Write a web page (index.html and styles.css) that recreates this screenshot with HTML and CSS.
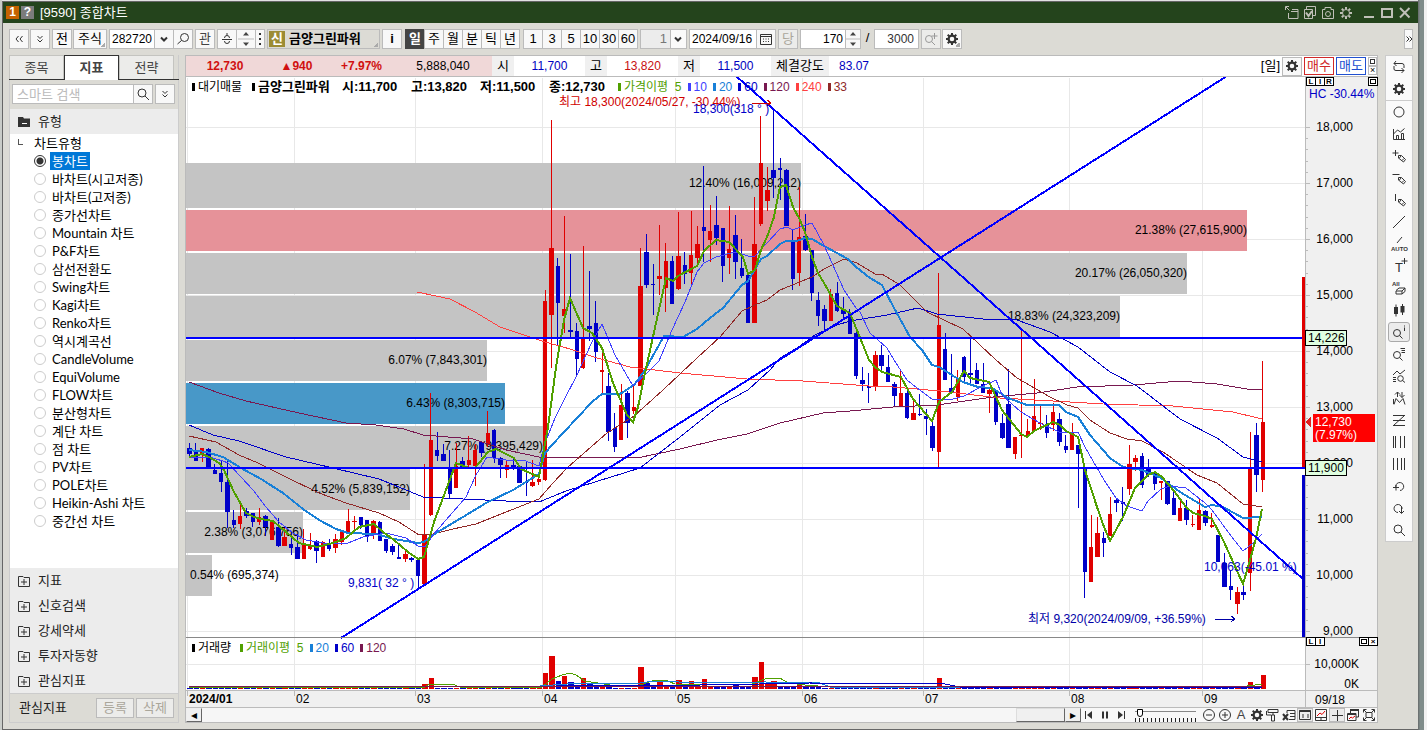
FILE: index.html
```html
<!DOCTYPE html>
<html lang="ko">
<head>
    <meta charset="UTF-8">
    <title>[9590] 종합차트</title>
    <link rel="stylesheet" href="styles.css">
</head>
<body>
    <svg class="sprite" aria-hidden="true">
        <symbol id="gear" viewBox="0 0 16 16"><circle cx="8" cy="8" r="3.4" stroke-width="2.2"/><path stroke-width="2" d="M8 2v2.500M8 11.500V14M2 8h2.500M11.500 8H14M3.700 3.700l1.700 1.700M10.600 10.600l1.700 1.700M3.700 12.300l1.700-1.700M10.600 5.400l1.700-1.700"/></symbol>
        <symbol id="gear-o" viewBox="0 0 16 16"><circle cx="8" cy="8" r="3.5"/><path stroke-width="2" d="M8 2v2.5M8 11.5V14M2 8h2.5M11.5 8H14M3.8 3.8l1.6 1.6M10.6 10.6l1.6 1.6M3.8 12.2l1.6-1.6M10.6 5.4l1.6-1.6"/></symbol>
        <symbol id="search" viewBox="0 0 16 16"><circle cx="7" cy="7" r="4"/><path d="M10 10l4 4"/></symbol>
        <symbol id="search-l" viewBox="0 0 16 16"><circle cx="9.5" cy="6.5" r="4"/><path d="M6.5 9.5L2.5 13"/></symbol>
        <symbol id="left2" viewBox="0 0 16 16"><path d="M7.5 5L5 8l2.5 3M11.5 5L9 8l2.5 3"/></symbol>
        <symbol id="right2" viewBox="0 0 8 16"><path d="M1.500 5.500L4 8l-2.500 2.500M4.500 5.500L7 8l-2.500 2.500"/></symbol>
        <symbol id="down2" viewBox="0 0 16 16"><path d="M5.5 5L8 7.5 10.5 5M5.5 8.5L8 11l2.5-2.5"/></symbol>
        <symbol id="down" viewBox="0 0 16 16"><path stroke-width="2" d="M5 6.5l3 3 3-3"/></symbol>
        <symbol id="link" viewBox="0 0 16 16"><path d="M5.5 7a2.5 2.5 0 1 1 5 0M3 8.5h10M5.5 10a2.5 2.5 0 1 0 5 0M8 2v2.5"/></symbol>
        <symbol id="calendar" viewBox="0 0 16 16"><path d="M2.5 3.5h11v10h-11zM2.5 5.5h11"/><path stroke-dasharray="1 1.5" d="M5 8h6.500M5 10.500h6.500"/></symbol>
        <symbol id="zoom-plus" viewBox="0 0 16 16"><circle cx="6" cy="8" r="3.500"/><path d="M8.500 10.500L12 14M11.500 2v6M8.500 5h6"/></symbol>
        <symbol id="win-out" viewBox="0 0 16 16"><path d="M1.500 5V1.500H5M2 2l3.500 3.500M8 4.500h6v9H4.500V8M7 6.500h7"/></symbol>
        <symbol id="win-check" viewBox="0 0 16 16"><path d="M4.500 4V1.500h9v9H11M2.500 4.500h8v9h-8z"/><path stroke-width="2" d="M4 7.500L6.500 11 10 6"/></symbol>
        <symbol id="camera" viewBox="0 0 16 16"><path d="M2.500 4.500H5v-2h6v2h2.500v9h-11z"/><circle cx="8" cy="9" r="2.500"/></symbol>
        <symbol id="folder-open" viewBox="0 0 16 16"><path fill="#333" stroke="none" d="M2 3h5l1 1.500h6V13H2z"/><path stroke="#fff" d="M6 9.500h5"/></symbol>
        <symbol id="folder-plus" viewBox="0 0 16 16"><path d="M2.500 3.500H7L8 4.500h5.500v9h-11zM8 6v6M5 9h6"/></symbol>
        <symbol id="refresh" viewBox="0 0 16 16"><path d="M5 2L3 4.500h8q2 0 2 2V9M3 4.500L5.500 7M3 7v3q0 1.500 2 1.500h8M10.500 9l2.500 2.500-2.500 2.500"/></symbol>
        <symbol id="circle" viewBox="0 0 16 16"><circle cx="8" cy="8" r="5"/></symbol>
        <symbol id="graph" viewBox="0 0 16 16"><path d="M2.500 3v10.500H14M2.500 8l4-4 3 2 4-3.500M5.500 13V9.500h2V13M10.500 13V7.500h2V13"/></symbol>
        <symbol id="pen" viewBox="0 0 16 16"><path d="M7.500 7.500h3l4 4-2 2.500-5-4zM10 8l-2 2.500M13 10.500l-2 2"/></symbol>
        <symbol id="line" viewBox="0 0 16 16"><path d="M2 14L14 2"/></symbol>
        <symbol id="eraser" viewBox="0 0 16 16"><path d="M5 10.500L8 8h6l-3 3H5v3h6v-3M11 14l3-2.500V8"/></symbol>
        <symbol id="candles" viewBox="0 0 16 16"><path stroke-width="4" d="M5 5v7M11.500 4v6.500"/><path d="M5 2.500v12M11.500 2v11"/></symbol>
        <symbol id="zoom-i" viewBox="0 0 16 16"><circle cx="6" cy="9" r="3.500"/><path d="M8.500 11.500l3 3M13.500 3.500V7M13.500 1.500v1"/></symbol>
        <symbol id="zoom-list" viewBox="0 0 16 16"><circle cx="6" cy="9" r="3.500"/><path d="M8.500 11.500l3 3M9.500 2.500h4.500M10.500 4.500H14M10.500 6.500H14"/></symbol>
        <symbol id="zoom-wave" viewBox="0 0 16 16"><circle cx="9.500" cy="10.500" r="2.800"/><path d="M11.500 12.500l2.500 2M2 7l4-4 3 3 5-4M2 9.500h3M2 11.500h3M2 13.500h3"/></symbol>
        <symbol id="wave-arrow" viewBox="0 0 16 16"><path d="M3 14.500l2-6 3.500 4 3.500-4 2 6M2.500 14V9M6.500 7V2L4 4.500M6.500 2L9 4.500M11 2v5.500M8.500 5L11 7.500 13.500 5"/></symbol>
        <symbol id="zee" viewBox="0 0 16 16"><path d="M2 3.500h12M13 4L3 13M2 8.500h12M2 13.500h12"/></symbol>
        <symbol id="bars-a" viewBox="0 0 16 16"><path d="M2.500 2v12M4.500 2v12M9.500 2v12M13.500 2v12"/></symbol>
        <symbol id="bars-b" viewBox="0 0 16 16"><path d="M2.500 2v12M6.500 2v12M10.500 2v12M13.500 2v12"/></symbol>
        <symbol id="undo" viewBox="0 0 16 16"><path d="M5 10a4 4 0 1 1 4 2.500M2 9.500h6M5 7v5.500"/></symbol>
        <symbol id="redo" viewBox="0 0 16 16"><path d="M7 12.500A4 4 0 1 1 11 9M10.500 7v6M8 11l2.500 2.500L13 11"/></symbol>
        <symbol id="to-start" viewBox="0 0 16 16"><path d="M4.500 4v8"/><path fill="#333" stroke="none" d="M11 4v8L6 8z"/></symbol>
        <symbol id="pause" viewBox="0 0 16 16"><path stroke-width="2" d="M6 4.500v7M10 4.500v7"/></symbol>
        <symbol id="to-end" viewBox="0 0 16 16"><path d="M11.500 4v8"/><path fill="#333" stroke="none" d="M5 4v8l5-4z"/></symbol>
        <symbol id="minus-c" viewBox="0 0 16 16"><circle cx="8" cy="8" r="5.500"/><path d="M5 8h6"/></symbol>
        <symbol id="plus-c" viewBox="0 0 16 16"><circle cx="8" cy="8" r="5.500"/><path d="M5 8h6M8 5v6"/></symbol>
        <symbol id="roller" viewBox="0 0 16 16"><path d="M3 2.500h10v3H3zM1.500 4v4H6M6.500 8h3v6h-3zM8 5.500V8"/></symbol>
        <symbol id="sheet-x" viewBox="0 0 16 16"><path d="M6 6V3.500h8v9H8M9 6.500h5M9 9.500h5"/><path stroke-width="2" d="M2 7l5 6M7 7l-5 6"/></symbol>
        <symbol id="grid-cal" viewBox="0 0 16 16"><path stroke-width="2" d="M2.500 4h11"/><path d="M2.500 3.500h11v9h-11zM5 8h2M5 10h2M10 8h2M10 10h2"/></symbol>
        <symbol id="mini-chart" viewBox="0 0 16 16"><path d="M2.500 2.500h11v11h-11zM2.500 10.500h11M8 11v2"/><path stroke="#d00" d="M4 9l3-3 2 1.500L12 4"/></symbol>
        <symbol id="plus" viewBox="0 0 16 16"><path d="M8.500 3v11M3 8.500h11"/></symbol>
        <symbol id="win-chart" viewBox="0 0 16 16"><path stroke-width="2" d="M5 3h9M3 7h8"/><path d="M5.500 3v3M13.500 3v7H11M2.500 6.500h8.500v7H2.500z"/><path stroke="#d00" d="M4 12l2-2 1.500 1L10 9"/></symbol>
        <symbol id="full" viewBox="0 0 16 16"><path d="M2.500 5.500v-3h3M10.500 2.500h3v3M13.500 10.500v3h-3M5.500 13.500h-3v-3M5 5.500h6v5H5zM3 3l2 2M13 3l-2 2M13 13l-2-2M3 13l2-2"/></symbol>
        <symbol id="updown" viewBox="0 0 16 20"><path fill="#444" stroke="none" d="M8 3l3 3.500H5zM8 17l3-3.500H5z"/><path stroke="#bbb" d="M0 10h16"/></symbol>
        <symbol id="dots" viewBox="0 0 8 16"><path stroke-width="2" d="M4 2v2M4 7v2M4 12v2"/></symbol>
    </svg>

    <div class="window">
        <header class="titlebar">
            <span class="badge orange">1</span>
            <span class="badge gray">?</span>
            <h1>[9590] 종합차트</h1>
            <div class="title-buttons">
                <button aria-label="분리"><svg><use href="#win-out"/></svg></button>
                <button aria-label="복사"><svg><use href="#win-check"/></svg></button>
                <button aria-label="캡처"><svg><use href="#camera"/></svg></button>
                <button aria-label="설정"><svg><use href="#gear-o"/></svg></button>
                <button class="big" aria-label="최소화"><svg viewBox="0 0 16 16"><path d="M3 12h10"/></svg></button>
                <button class="big" aria-label="최대화"><svg viewBox="0 0 16 16"><path d="M3 4h10v8H3z"/></svg></button>
                <button class="big" aria-label="닫기"><svg viewBox="0 0 16 16"><path d="M3 3l9.500 9.500M12.500 3L3 12.500"/></svg></button>
            </div>
        </header>

        <div class="toolbar">
            <div class="group">
                <button class="tool" aria-label="이전"><svg><use href="#left2"/></svg></button>
                <button class="tool" aria-label="펼치기"><svg><use href="#down2"/></svg></button>
            </div>
            <div class="group">
                <button class="tool">전</button>
                <button class="tool wide corner">주식</button>
            </div>
            <div class="joined">
                <input class="code" type="text" value="282720" aria-label="종목코드">
                <button class="tool" aria-label="목록"><svg><use href="#down"/></svg></button>
                <button class="tool" aria-label="종목검색"><svg><use href="#search-l"/></svg></button>
            </div>
            <button class="tool dim">관</button>
            <div class="joined">
                <button class="tool" aria-label="연동"><svg><use href="#link"/></svg></button>
                <button class="tool" aria-label="위아래"><svg class="tall"><use href="#updown"/></svg></button>
                <button class="tool slim" aria-label="더보기"><svg class="thin"><use href="#dots"/></svg></button>
            </div>
            <button class="stock corner"><span class="new">신</span>금양그린파워</button>
            <button class="tool bold">i</button>
            <div class="joined periods">
                <button class="tool on">일</button>
                <button class="tool">주</button>
                <button class="tool">월</button>
                <button class="tool">분</button>
                <button class="tool">틱</button>
                <button class="tool">년</button>
            </div>
            <div class="joined periods">
                <button class="tool">1</button>
                <button class="tool">3</button>
                <button class="tool">5</button>
                <button class="tool">10</button>
                <button class="tool">30</button>
                <button class="tool">60</button>
            </div>
            <div class="picker">
                <select aria-label="주기"><option>1</option></select>
                <svg><use href="#down"/></svg>
            </div>
            <div class="joined">
                <input class="date" type="text" value="2024/09/16" aria-label="날짜">
                <button class="tool" aria-label="달력"><svg><use href="#calendar"/></svg></button>
            </div>
            <button class="tool off">당</button>
            <div class="joined">
                <input class="count" type="text" value="170" aria-label="표시 개수">
                <button class="tool spin" aria-label="증감"><svg class="tall"><use href="#updown"/></svg></button>
            </div>
            <span class="slash">/</span>
            <input class="total" type="text" value="3000" aria-label="전체 개수">
            <div class="group">
                <button class="tool off" aria-label="확대"><svg><use href="#zoom-plus"/></svg></button>
                <button class="tool corner" aria-label="차트설정"><svg><use href="#gear"/></svg></button>
            </div>
            <button class="tool more" aria-label="더보기"><svg class="thin"><use href="#right2"/></svg></button>
        </div>

        <div class="main">
            <aside class="sidebar">
                <nav class="tabs">
                    <button>종목</button>
                    <button class="active">지표</button>
                    <button>전략</button>
                </nav>
                <div class="search">
                    <div class="joined">
                        <input type="text" placeholder="스마트 검색" aria-label="스마트 검색">
                        <button class="tool" aria-label="검색"><svg><use href="#search"/></svg></button>
                    </div>
                    <button class="tool" aria-label="펼치기"><svg><use href="#down2"/></svg></button>
                </div>
                <button class="section"><svg><use href="#folder-open"/></svg>유형</button>
                <div class="tree">
                    <p>차트유형</p>
                    <label><input type="radio" name="type" checked><span>봉차트</span></label>
                    <label><input type="radio" name="type"><span>바차트(시고저종)</span></label>
                    <label><input type="radio" name="type"><span>바차트(고저종)</span></label>
                    <label><input type="radio" name="type"><span>종가선차트</span></label>
                    <label><input type="radio" name="type"><span>Mountain 차트</span></label>
                    <label><input type="radio" name="type"><span>P&amp;F차트</span></label>
                    <label><input type="radio" name="type"><span>삼선전환도</span></label>
                    <label><input type="radio" name="type"><span>Swing차트</span></label>
                    <label><input type="radio" name="type"><span>Kagi차트</span></label>
                    <label><input type="radio" name="type"><span>Renko차트</span></label>
                    <label><input type="radio" name="type"><span>역시계곡선</span></label>
                    <label><input type="radio" name="type"><span>CandleVolume</span></label>
                    <label><input type="radio" name="type"><span>EquiVolume</span></label>
                    <label><input type="radio" name="type"><span>FLOW차트</span></label>
                    <label><input type="radio" name="type"><span>분산형차트</span></label>
                    <label><input type="radio" name="type"><span>계단 차트</span></label>
                    <label><input type="radio" name="type"><span>점 차트</span></label>
                    <label><input type="radio" name="type"><span>PV차트</span></label>
                    <label><input type="radio" name="type"><span>POLE차트</span></label>
                    <label><input type="radio" name="type"><span>Heikin-Ashi 차트</span></label>
                    <label><input type="radio" name="type"><span>중간선 차트</span></label>
                </div>
                <button class="section"><svg><use href="#folder-plus"/></svg>지표</button>
                <button class="section"><svg><use href="#folder-plus"/></svg>신호검색</button>
                <button class="section"><svg><use href="#folder-plus"/></svg>강세약세</button>
                <button class="section"><svg><use href="#folder-plus"/></svg>투자자동향</button>
                <button class="section"><svg><use href="#folder-plus"/></svg>관심지표</button>
                <div class="side-foot">
                    <span>관심지표</span>
                    <button disabled>등록</button>
                    <button disabled>삭제</button>
                </div>
            </aside>

            <section class="panel">
                <div class="quote">
                    <div class="now">
                        <b>12,730</b><b>▲940</b><b>+7.97%</b><span>5,888,040</span>
                    </div>
                    <span class="name">시</span><span class="val">11,700</span>
                    <span class="name">고</span><span class="val up">13,820</span>
                    <span class="name">저</span><span class="val">11,500</span>
                    <span class="name long">체결강도</span><span class="val short">83.07</span>
                    <div class="trade">
                        <span>[일]</span>
                        <button class="tool" aria-label="설정"><svg><use href="#gear"/></svg></button>
                        <button class="buy">매수</button>
                        <button class="sell">매도</button>
                        <div class="minis"><button aria-label="최대화"><i></i></button><button aria-label="닫기">×</button></div>
                    </div>
                </div>

                <div class="plot">
                    <svg id="chart" viewBox="186 77 1191 630"></svg>
                    <div class="legend">
                        <span>대기매물</span>
                        <span class="bold">금양그린파워</span>
                        <b>시:11,700</b><b>고:13,820</b><b>저:11,500</b><b>종:12,730</b>
                        <span class="c5">가격이평&nbsp; 5</span>
                        <span class="c10">10</span>
                        <span class="c20">20</span>
                        <span class="c60">60</span>
                        <span class="c120">120</span>
                        <span class="c240">240</span>
                        <span class="c33">33</span>
                    </div>
                    <div class="legend volume">
                        <span>거래량</span>
                        <span class="c5">거래이평&nbsp; 5</span>
                        <span class="c20">20</span>
                        <span class="c60">60</span>
                        <span class="c120">120</span>
                    </div>
                    <div class="axis-buttons">
                        <button>L</button><button>I</button><button>R</button>
                        <button class="end" aria-label="최대화"><i></i></button>
                    </div>
                    <div class="axis-buttons volume">
                        <button>L</button><button>I</button>
                        <button class="end" aria-label="최대화"><i></i></button><button>×</button>
                    </div>
                </div>

                <div class="bottom">
                    <div class="scroll">
                        <button aria-label="왼쪽">◂</button>
                        <div class="track"><div class="thumb"></div></div>
                        <button aria-label="오른쪽">▸</button>
                    </div>
                    <div class="icons">
                        <button aria-label="처음"><svg><use href="#to-start"/></svg></button>
                        <button aria-label="멈춤"><svg><use href="#pause"/></svg></button>
                        <button aria-label="끝"><svg><use href="#to-end"/></svg></button>
                    </div>
                    <input class="speed" type="range" min="0" max="100" value="4" aria-label="속도">
                    <div class="icons">
                        <button aria-label="축소"><svg><use href="#minus-c"/></svg></button>
                        <button aria-label="확대"><svg><use href="#plus-c"/></svg></button>
                        <button>A</button>
                        <button aria-label="설정"><svg><use href="#gear"/></svg></button>
                        <button aria-label="색상"><svg><use href="#roller"/></svg></button>
                        <button aria-label="엑셀"><svg><use href="#sheet-x"/></svg></button>
                        <button class="on" aria-label="표"><svg><use href="#grid-cal"/></svg></button>
                        <button aria-label="차트"><svg><use href="#mini-chart"/></svg></button>
                        <button class="on" aria-label="십자선"><svg><use href="#plus"/></svg></button>
                        <button aria-label="새 창"><svg><use href="#win-chart"/></svg></button>
                        <button aria-label="전체화면"><svg><use href="#full"/></svg></button>
                    </div>
                </div>
            </section>

            <div class="rail">
                <button aria-label="새로고침"><svg><use href="#refresh"/></svg></button>
                <button aria-label="설정"><svg><use href="#gear"/></svg></button>
                <hr>
                <button aria-label="원"><svg><use href="#circle"/></svg></button>
                <button aria-label="그래프"><svg><use href="#graph"/></svg></button>
                <button aria-label="십자 그리기"><svg viewBox="0 0 16 16"><use href="#pen"/><path d="M4.500 2v6M1.500 5h6"/></svg></button>
                <button aria-label="수평선"><svg viewBox="0 0 16 16"><use href="#pen"/><path d="M1.500 4.500h7"/></svg></button>
                <button aria-label="수직선"><svg viewBox="0 0 16 16"><use href="#pen"/><path d="M4.500 2v7"/></svg></button>
                <button aria-label="추세선"><svg><use href="#line"/></svg></button>
                <button class="auto" aria-label="자동추세선"><svg viewBox="0 0 16 16"><path d="M6 7l5-6"/><text x="0" y="15">AUTO</text></svg></button>
                <button class="txt" aria-label="문자"><svg viewBox="0 0 16 16"><path d="M13.500 0v6M10.500 3h6"/><text x="4" y="14">T</text></svg></button>
                <button class="auto" aria-label="모두 지우기"><svg viewBox="0 0 16 16"><use href="#eraser"/><text x="1" y="6">All</text></svg></button>
                <button aria-label="봉"><svg><use href="#candles"/></svg></button>
                <button class="on" aria-label="정보"><svg><use href="#zoom-i"/></svg></button>
                <button aria-label="목록 조회"><svg><use href="#zoom-list"/></svg></button>
                <button aria-label="패턴 조회"><svg><use href="#zoom-wave"/></svg></button>
                <button aria-label="파동"><svg><use href="#wave-arrow"/></svg></button>
                <button aria-label="되돌림"><svg><use href="#zee"/></svg></button>
                <button aria-label="시간대"><svg><use href="#bars-a"/></svg></button>
                <button aria-label="등간격"><svg><use href="#bars-b"/></svg></button>
                <button aria-label="이전으로"><svg><use href="#undo"/></svg></button>
                <button aria-label="다음으로"><svg><use href="#redo"/></svg></button>
                <button aria-label="찾기"><svg><use href="#search"/></svg></button>
            </div>
        </div>
    </div>
    <script src="chart.js"></script>
</body>
</html>
```

FILE: styles.css
```css
* {
    box-sizing: border-box;
}
body {
    margin: 0;
    min-height: 100vh;
    padding: 1px 9px 0 2px;
    background: linear-gradient(to right, #c9ccc8 0, #c9ccc8 2px, transparent 2px, transparent calc(100% - 9px), #66696a calc(100% - 9px), #7f8c8a calc(100% - 7px), #7f8c8a calc(100% - 3px), #f2f2f2 calc(100% - 3px)), #e2e2e2;
    font: 13px/18px "Liberation Sans", "Noto Sans CJK KR", sans-serif;
    color: #000;
}
button, input, select {
    font: inherit;
    color: inherit;
    margin: 0;
    padding: 0;
    border: none;
    border-radius: 0;
    background: none;
    outline: none;
}
svg {
    display: block;
    width: 16px;
    height: 16px;
    flex: none;
    fill: none;
    stroke: #333;
    stroke-width: 1;
}
.sprite {
    position: absolute;
    width: 0;
    height: 0;
}
.window {
    display: flex;
    flex-direction: column;
    min-height: calc(100vh - 1px);
    border: 1px solid #666;
    border-right: none;
    background: #dcdbd5;
}

/* title bar */
.titlebar {
    display: flex;
    align-items: center;
    gap: 2px;
    height: 21px;
    padding: 0 5px 0 3px;
    background: #24441c;
    color: #fff;
}
.titlebar h1 {
    margin: 0 0 0 4px;
    font-size: 13px;
    font-weight: normal;
}
.badge {
    width: 13px;
    height: 13px;
    font-size: 12px;
    font-weight: bold;
    line-height: 13px;
    text-align: center;
}
.orange {
    background: #c46200;
}
.gray {
    background: #7c7c7c;
}
.title-buttons {
    display: flex;
    gap: 2px;
    margin-left: auto;
}
.title-buttons svg {
    stroke: #c0c0b8;
}
.title-buttons .big svg {
    stroke-width: 2;
}
.title-buttons .big:nth-child(5) {
    margin-left: 5px;
}

/* toolbar */
.toolbar {
    display: flex;
    gap: 2px;
    padding: 6px 5px 6px 6px;
}
.group {
    display: flex;
    gap: 1px;
}
.joined {
    display: flex;
}
.joined > * + * {
    margin-left: -1px;
}
.tool {
    position: relative;
    display: flex;
    align-items: center;
    justify-content: center;
    width: 20px;
    height: 20px;
    border: 1px solid #bbb;
    background: #f8f8f8;
}
.tool.wide {
    width: 34px;
}
.tool.slim {
    width: 10px;
}
.tool.dim {
    color: #444;
}
.tool.off {
    background: #ececea;
    color: #aaa69a;
}
.tool.off svg {
    stroke: #999;
}
.tool.on {
    background: #444;
    border-color: #444;
    color: #fff;
    font-weight: bold;
}
.tool.bold {
    font-weight: bold;
}
.tool.spin {
    width: 16px;
}
.tool.more {
    width: 9px;
    margin-left: auto;
    overflow: hidden;
}
svg.tall {
    height: 20px;
}
svg.thin {
    width: 8px;
}
.tool.corner, .stock.corner {
    background-image: linear-gradient(135deg, transparent 50%, #aaa 50%);
    background-size: 5px 5px;
    background-position: right 1px bottom 1px;
    background-repeat: no-repeat;
}
.periods {
    margin-left: 1px;
}
.toolbar input {
    height: 20px;
    border: 1px solid #bbb;
    background: #fff;
    padding: 0 2px;
    font-size: 12px;
}
.toolbar .code {
    width: 46px;
}
.toolbar .date {
    width: 68px;
}
.toolbar .count {
    width: 46px;
    text-align: right;
}
.toolbar .total {
    width: 45px;
    padding-right: 4px;
    text-align: right;
    color: #333;
}
.stock {
    display: flex;
    align-items: center;
    gap: 4px;
    width: 113px;
    height: 20px;
    padding: 0 1px;
    border: 1px solid #bbb;
    font-weight: bold;
}
.new {
    width: 16px;
    height: 16px;
    background: #9c8c34;
    color: #fff;
    line-height: 16px;
}
.picker {
    position: relative;
    width: 47px;
    height: 20px;
    border: 1px solid #bbb;
    background: #fafafa;
}
.picker select {
    appearance: none;
    width: 30px;
    height: 18px;
    padding-right: 3px;
    border-right: 1px solid #bbb;
    background: #ececec;
    color: #777;
    text-align-last: right;
}
.picker svg {
    position: absolute;
    right: 0;
    top: 1px;
}
.slash {
    width: 9px;
    text-align: center;
}

/* left side */
.main {
    display: flex;
    align-items: flex-start;
    padding: 0 5px 0 6px;
}
.sidebar {
    flex: none;
    display: flex;
    flex-direction: column;
    width: 170px;
    height: 668px;
    margin-right: 6px;
    border: 1px solid #ccc;
    border-top: none;
}
.tabs {
    display: flex;
    height: 25px;
    margin: 0 -1px;
    border-bottom: 1px solid #333;
}
.tabs button {
    width: 55px;
    height: 24px;
    border: 1px solid #c4c4c0;
    border-bottom: none;
    background: #ececea;
    color: #444;
}
.tabs .active {
    height: 25px;
    border-color: #333;
    background: #fff;
    font-weight: bold;
}
.search {
    display: flex;
    justify-content: space-between;
    padding: 4px 3px 5px 2px;
}
.search input {
    width: 122px;
    height: 20px;
    padding: 0 4px;
    border: 1px solid #bbb;
    background: #fff;
}
.search input::placeholder {
    color: #bbb;
}
.section {
    display: flex;
    align-items: center;
    gap: 6px;
    width: 100%;
    height: 25px;
    flex: none;
    padding-left: 6px;
    background: #ececec;
    color: #222;
}
.tree {
    flex: 1;
    background: #fff;
    font-family: Lato, "Noto Sans CJK KR", sans-serif;
}
.tree p {
    margin: 0;
    padding-left: 24px;
    height: 18px;
    background: linear-gradient(#555, #555) 8px 5px / 1px 6px no-repeat, linear-gradient(#555, #555) 8px 10px / 5px 1px no-repeat;
}
.tree label {
    display: flex;
    align-items: center;
    gap: 4px;
    height: 18px;
    padding-left: 24px;
}
.tree input {
    appearance: none;
    width: 12px;
    height: 12px;
    border: 1px solid #ccc;
    border-radius: 50%;
    background: #fff;
}
.tree input:checked {
    border-color: #333;
    background: radial-gradient(#333 0, #333 3px, #fff 4px);
}
.tree span {
    height: 18px;
    padding: 0 2px;
}
.tree input:checked + span {
    background: #0078d7;
    color: #fff;
}
.side-foot {
    display: flex;
    align-items: center;
    gap: 2px;
    height: 29px;
    flex: none;
    padding: 0 4px 0 9px;
    border-top: 1px solid #ccc;
    color: #222;
}
.side-foot span {
    margin-right: auto;
}
.side-foot button {
    width: 38px;
    height: 20px;
    border: 1px solid #bbb;
    background: #ececea;
    color: #aaa69a;
}

/* quote bar */
.panel {
    flex: 1;
    min-width: 0;
    border: 1px solid #bbb;
    background: #fff;
}
.quote {
    display: flex;
    height: 21px;
    border-bottom: 1px solid #bbb;
    line-height: 20px;
    text-align: center;
}
.now {
    display: flex;
    width: 306px;
    background: #f0d8d8;
    font-size: 12px;
}
.now b {
    width: 65px;
    color: #d01010;
}
.now b:first-child {
    width: 78px;
}
.now span {
    flex: 1;
}
.name {
    width: 22px;
    background: #f0f0f0;
}
.name.long {
    width: 58px;
}
.val {
    width: 71px;
    color: #0000c0;
    font-size: 12px;
}
.val.short {
    width: 50px;
}
.val.up {
    color: #c81010;
}
.trade {
    display: flex;
    align-items: center;
    gap: 2px;
    margin-left: auto;
}
.trade .tool {
    height: 19px;
}
.trade .buy, .trade .sell {
    width: 30px;
    height: 18px;
    border: 1px solid #d02828;
    color: #d02828;
    line-height: 16px;
}
.trade .sell {
    border-color: #2050d0;
    color: #2050d0;
}
.minis {
    display: flex;
    flex-direction: column;
    width: 9px;
}
.minis button {
    height: 9px;
    padding: 1px;
    border: 1px solid #bbb;
    font-size: 9px;
    line-height: 5px;
}
.minis i {
    display: block;
    height: 5px;
    border: 1px solid #333;
}

/* chart */
.plot {
    position: relative;
}
#chart {
    width: 100%;
    height: auto;
    shape-rendering: crispEdges;
}
#chart text {
    stroke: none;
    fill: #000;
    font-size: 12px;
}
.legend {
    position: absolute;
    left: 6px;
    top: 1px;
    display: flex;
    gap: 6px;
    font-size: 12px;
}
.legend.volume {
    top: 562px;
}
.legend span::before {
    content: "";
    display: inline-block;
    width: 3px;
    height: 8px;
    margin-right: 3px;
    background: currentColor;
}
.legend .bold, .legend b {
    font-size: 13px;
    font-weight: bold;
}
.legend b {
    min-width: 63px;
}
.legend span:first-child {
    min-width: 54px;
}
.legend.volume span:first-child {
    min-width: 42px;
}
.legend .bold {
    min-width: 84px;
}
.c5 {
    color: #50a000;
}
.c10 {
    color: #4040ff;
}
.c20 {
    color: #1880d8;
}
.c60 {
    color: #0000c8;
}
.c120 {
    color: #781850;
}
.c240 {
    color: #ff4040;
}
.c33 {
    color: #902828;
}
.axis-buttons {
    position: absolute;
    right: 0;
    top: 0;
    display: flex;
    width: 71px;
}
.axis-buttons.volume {
    top: 560px;
}
.axis-buttons button {
    width: 10px;
    height: 9px;
    margin-right: -1px;
    border: 1px solid #000;
    background: #fff;
    font-size: 8px;
    font-weight: bold;
    line-height: 7px;
}
.axis-buttons .end {
    margin-left: auto;
    padding: 1px;
}
.axis-buttons i {
    display: block;
    height: 5px;
    border: 1px solid #000;
}

/* bottom bar */
.bottom {
    display: flex;
    height: 15px;
    border-top: 1px solid #bbb;
    background: #f8f8f8;
}
.scroll {
    flex: 1;
    display: flex;
}
.scroll button {
    width: 16px;
    border: 1px solid;
    border-color: #eee #666 #666 #eee;
    background: #f0f0f0;
    font-size: 12px;
    line-height: 10px;
}
.track {
    flex: 1;
    background: #f6f6f6;
}
.thumb {
    width: 49px;
    height: 14px;
    margin-left: auto;
    border: 1px solid;
    border-color: #ddd #666 #666 #ddd;
    background: #f0f0f0;
}
.icons {
    display: flex;
}
.icons button {
    display: flex;
    align-items: center;
    justify-content: center;
    width: 16px;
    height: 14px;
    color: #444;
}
.icons .on {
    border: 1px solid #bbb;
    background: #ececec;
}
.speed {
    appearance: none;
    width: 61px;
    height: 14px;
    margin: 0 5px 0 6px;
    background: linear-gradient(#888, #888) 0 3px / 100% 1px no-repeat, repeating-linear-gradient(to right, #222 0, #222 1px, transparent 1px, transparent 4px) 0 100% / 100% 4px no-repeat;
}
.speed::-webkit-slider-thumb {
    appearance: none;
    width: 6px;
    height: 8px;
    margin-top: -4px;
    border: 1px solid #000;
    border-radius: 0 0 3px 3px;
    background: #fff;
}

/* right rail */
.rail {
    display: flex;
    flex-direction: column;
    align-items: center;
    width: 28px;
    margin-left: 7px;
    border: 1px solid #ccc;
    background: #fafafa;
}
.rail button {
    display: flex;
    align-items: center;
    justify-content: center;
    width: 22px;
    height: 22px;
}
.rail hr {
    width: 100%;
    margin: 0;
    border: none;
    border-top: 1px solid #ccc;
}
.rail .on {
    height: 20px;
    margin: 1px 0;
    border: 1px solid #aaa;
    border-radius: 3px;
    background: #ececec;
}
.rail svg {
    overflow: visible;
}
.rail text {
    fill: #333;
    stroke: none;
    font-size: 6px;
    font-weight: bold;
}
.rail .txt text {
    font-size: 13px;
    font-weight: normal;
}
```

FILE: chart.js
```js
const svg = document.getElementById('chart');
const RIGHT = 1305;
const FIRST_X = 189.4;
const STEP = 6.351;
const RED = '#e00000';
const BLUE = '#0000c8';

function add(tag, attrs, text) {
    const el = document.createElementNS('http://www.w3.org/2000/svg', tag);
    for (const key in attrs) el.setAttribute(key, attrs[key]);
    if (text) el.textContent = text;
    svg.appendChild(el);
}
function rect(x, y, width, height, fill) {
    add('rect', { x, y, width, height, fill, stroke: 'none' });
}
function line(points, stroke, width) {
    add('polyline', { points, stroke, 'stroke-width': width });
}
function label(x, y, text, color, anchor) {
    add('text', { x, y, style: 'fill:' + (color || '#000'), 'text-anchor': anchor || 'start' }, text);
}

// grid
for (let i = 0; i < 10; i++) rect(186, 127 + i * 56, RIGHT - 186, 1, '#e8e8e8');
rect(186, 664, RIGHT - 186, 1, '#e8e8e8');
const months = [[187, '2024/01'], [294, '02'], [415, '03'], [542, '04'], [675, '05'], [802, '06'], [923, '07'], [1069, '08'], [1202, '09']];
months.forEach(m => rect(m[0], 78, 1, 612, '#e8e8e8'));

// volume profile: top, height, right edge, label
const profile = [
    [163, 45, 801, '12.40% (16,009,212)'],
    [210, 41, 1247, '21.38% (27,615,900)', '#e69299'],
    [253, 41, 1187, '20.17% (26,050,320)'],
    [296, 41, 1120, '18.83% (24,323,209)'],
    [340, 41, 487, '6.07% (7,843,301)'],
    [383, 41, 505, '6.43% (8,303,715)', '#4898c8'],
    [426, 41, 543, '7.27% (9,395,429)'],
    [469, 41, 410, '4.52% (5,839,152)'],
    [512, 41, 303, '2.38% (3,076,756)'],
    [555, 41, 212, '0.54% (695,374)']
];
profile.forEach(p => {
    rect(186, p[0], p[2] - 186, p[1], p[4] || '#c4c4c4');
    if (p[2] < 250) label(190, p[0] + 24, p[3]);
    else label(p[2], p[0] + 24, p[3], '#000', 'end');
});

// candles: high, body top, body bottom, low, r(ise) / b(reak)
const candles = `443 448 454 457 b,443 451 461 461 b,448 448 454 462 r,448 449 467 467 b,464 470 474 474 b,
460 473 482 492 b,461 482 512 528 b,510 520 525 528 b,504 516 524 529 r,508 511 516 518 b,
513 513 522 527 b,508 517 522 525 r,515 516 527 536 b,520 522 540 540 r,518 527 546 547 b,
528 537 546 546 r,533 544 548 555 b,534 547 559 559 b,529 545 559 559 r,533 546 549 550 r,
540 541 551 563 b,541 542 557 557 r,539 543 549 551 b,534 539 548 553 r,530 531 542 545 r,
509 521 533 533 r,516 521 522 530 r,517 517 525 529 b,520 520 536 542 b,520 521 535 539 r,
521 522 541 541 b,539 539 551 553 b,544 546 552 555 b,545 557 559 559 b,549 554 559 562 r,
557 558 560 562 b,560 560 576 588 b,464 535 584 584 r,393 440 515 516 r,432 450 456 461 b,
444 454 461 461 b,450 468 494 498 b,443 466 488 488 r,457 461 467 469 b,436 460 465 469 r,
444 450 466 486 r,441 442 453 457 b,411 433 444 447 r,429 430 458 463 b,457 458 465 478 b,
460 465 470 478 r,458 465 469 470 b,466 466 483 483 b,461 482 483 496 b,460 482 486 487 r,
475 479 482 485 r,290 301 480 481 r,120 248 315 368 r,258 266 303 346 b,216 309 316 333 r,
254 330 332 339 b,323 331 359 375 b,246 338 368 369 r,271 326 329 341 b,301 323 352 362 b,
353 370 372 394 r,373 386 432 441 b,413 428 447 452 b,384 405 440 440 r,391 393 423 438 b,
384 407 411 414 r,248 286 386 386 r,234 252 285 288 b,264 284 285 315 b,225 276 279 295 r,
243 261 288 312 r,256 261 304 304 b,212 256 289 290 r,252 265 274 284 b,211 255 273 285 r,
226 244 258 263 r,166 227 231 262 b,205 231 240 262 r,196 225 238 245 b,228 228 266 282 b,
206 249 258 274 r,215 235 262 279 b,239 268 276 278 b,275 275 323 323 b,197 244 323 323 r,
116 163 224 226 r,167 190 201 211 r,110 170 178 198 b,158 168 170 200 b,169 170 226 226 b,
229 242 279 290 b,187 237 273 286 r,214 236 250 251 b,250 250 293 301 b,292 300 316 326 b,
305 309 321 330 b,289 294 321 321 r,282 293 311 312 b,297 310 314 318 b,309 313 334 334 b,
332 333 376 379 b,367 380 384 391 b,373 386 388 403 b,351 355 386 391 r,345 355 366 370 b,
355 367 382 382 b,382 384 396 407 b,370 393 407 407 r,390 393 418 419 b,400 413 420 420 r,
394 414 415 416 b,409 416 419 435 b,420 426 448 451 b,273 325 452 467 r,333 349 380 380 b,
354 388 393 394 b,370 378 397 401 r,356 357 377 384 b,337 373 375 385 b,363 370 384 384 b,
363 384 393 393 b,387 390 394 413 r,390 392 422 425 b,414 423 438 439 b,369 404 448 448 b,
437 437 454 459 r,329 435 436 458 r,419 431 436 436 r,379 416 431 431 r,405 423 424 430 r,
415 425 433 438 b,403 412 425 431 r,413 419 442 446 b,435 446 450 453 b,423 432 450 450 r,
445 445 454 508 b,467 468 572 598 b,515 547 582 582 r,517 533 557 557 r,532 538 543 557 b,
497 514 536 536 r,498 500 503 512 b,487 502 504 521 b,445 464 489 495 r,455 458 462 471 r,
453 456 485 488 b,459 468 475 477 b,472 473 484 490 b,481 481 483 500 r,481 481 504 505 b,
490 498 515 515 b,500 508 521 521 r,500 508 520 525 b,515 524 525 527 r,499 510 530 530 r,
510 511 523 526 b,513 525 527 528 r,535 535 562 562 b,553 563 587 587 b,571 586 590 600 b,
587 592 604 614 r,585 592 595 600 b,432 468 573 591 r,423 435 475 492 b,361 422 480 492 r`.split(',').map(s => s.trim().split(' '));

// bars that stand out in the volume pane, the rest stay near zero
const volumes = {
    37: 5, 38: 11, 56: 16, 57: 33, 58: 8, 59: 13, 60: 7, 61: 3, 62: 11, 63: 5, 64: 3, 65: 3, 66: 3, 71: 22, 72: 6, 73: 3,
    74: 8, 75: 3, 76: 3, 77: 9, 78: 4, 79: 8, 80: 3, 81: 10, 82: 3, 83: 3, 84: 3, 85: 3, 86: 4, 87: 3, 88: 3, 89: 12, 90: 27,
    91: 6, 92: 8, 93: 3, 94: 2, 95: 2, 96: 4, 97: 2, 98: 2, 99: 2, 118: 11, 119: 3, 167: 7, 168: 3, 169: 14
};
const redVolumes = [74, 81, 92];

candles.forEach((c, i) => {
    const x = FIRST_X + i * STEP;
    const left = Math.round(x - 2.2);
    const width = Math.round(x + 2.2) - left;
    const color = c[4] === 'r' ? RED : BLUE;
    rect(Math.floor(x), c[0], 1, c[3] - c[0], color);
    rect(left, c[1], width, Math.max(1, c[2] - c[1]), color);
    const h = volumes[i] || 1;
    rect(left, 689 - h, width + 1, h, redVolumes.includes(i) ? RED : color);
});

// moving averages
line('417,292 450,299 475,312 500,327 530,337 545,342 570,349 597,358 630,367 680,373 747,379 803,381 869,386 893,387 940,391 1000,398 1070,402 1103,404 1173,406 1233,412 1262,419', '#ff4040', 1);
line('189,382 219,393 246,401 299,413 346,423 376,425 404,429 423,435 473,439 506,450 539,457 570,457 637,458 680,449 717,440 747,434 780,423 823,413 850,411 893,407 937,405 993,397 1037,393 1077,387 1133,385 1180,381 1217,384 1247,389 1262,389', '#781850', 1);
line('189,425 213,435 239,441 286,457 333,468 379,479 399,487 423,497 463,499 506,501 539,502 566,491 640,468 680,437 720,405 748,390 770,370 780,358 797,348 815,335 837,325 850,321 887,315 918,308 937,314 983,319 1017,320 1050,332 1078,347 1110,372 1137,386 1180,419 1217,438 1243,457 1262,462', '#0000c8', 1);
line('189,436 216,442 239,455 258,463 286,477 319,493 346,503 379,513 399,522 419,535 433,534 453,529 476,524 506,512 539,499 553,483 567,468 607,433 634,416 663,390 697,358 720,337 742,311 755,305 767,300 780,290 812,277 824,269 844,259 857,263 875,274 882,274 900,285 927,312 963,329 996,360 1017,378 1050,397 1067,405 1078,408 1090,420 1110,433 1127,439 1142,441 1163,452 1197,475 1217,483 1243,504 1262,507', '#902828', 1);
line('189,450 206,452 223,457 241,468 261,479 283,493 303,509 319,520 336,529 348,533 376,534 394,539 418,543 424,542 436,533 463,517 486,503 513,490 539,474 545,453 552,445 577,418 592,402 602,394 620,394 634,385 645,370 664,336 683,337 697,329 710,318 723,308 742,285 748,281 761,259 767,256 780,244 786,241 797,241 805,238 812,239 824,246 837,253 848,259 856,267 870,278 882,285 894,308 910,337 922,350 932,365 939,367 963,382 978,387 992,388 1008,398 1027,405 1059,405 1066,412 1078,417 1090,435 1110,458 1123,467 1142,470 1161,478 1180,492 1205,507 1212,505 1223,507 1243,518 1262,517', '#1880d8', 2);
line('189,457 209,457 223,461 228,463 241,477 253,490 266,507 279,522 293,533 306,540 329,544 348,543 363,537 386,533 406,538 418,546 425,547 433,535 446,520 466,497 476,475 487,457 506,460 523,460 539,466 545,443 555,418 564,400 577,375 592,342 602,324 615,355 633,386 647,373 659,361 672,330 685,302 697,272 704,263 716,257 735,252 748,256 755,256 767,243 780,229 787,227 793,230 805,225 812,223 824,245 844,290 856,308 860,312 870,333 887,348 894,360 907,380 917,388 932,399 953,399 964,396 983,386 996,380 1002,395 1021,412 1040,423 1059,432 1078,432 1085,447 1104,480 1116,498 1127,506 1142,511 1148,501 1161,489 1170,486 1186,488 1205,503 1212,510 1231,536 1243,551 1253,543 1262,534', '#4040ff', 1);
line('189,457 202,454 209,457 219,463 224,470 234,492 246,513 254,517 261,519 273,521 286,532 299,543 317,547 333,543 346,538 359,527 374,524 383,532 394,540 408,552 418,559 424,557 434,522 456,463 469,468 475,468 488,452 496,449 514,458 521,469 539,477 548,427 556,367 564,320 570,298 583,328 592,333 602,348 613,383 627,415 633,422 638,407 645,373 666,278 673,281 678,276 697,266 704,251 716,240 729,242 743,257 748,274 755,270 761,250 767,237 774,217 780,187 786,185 793,207 799,218 805,232 812,257 818,273 824,283 837,306 850,313 856,328 863,345 869,360 875,367 882,372 901,377 913,399 932,421 939,402 952,392 964,371 970,378 989,382 1002,410 1021,434 1027,437 1034,431 1053,422 1060,425 1066,431 1078,437 1085,470 1097,507 1104,527 1110,541 1123,517 1135,488 1148,475 1155,472 1162,477 1174,491 1186,507 1193,513 1205,516 1212,519 1224,542 1243,584 1250,560 1256,538 1262,509', '#50a000', 2);

// volume averages
line('189,687 425,687 430,684 452,684 460,687 542,687 552,679 562,675 570,673 576,675 585,681 610,685 630,687 640,685 655,680 665,680 675,684 730,685 752,684 765,679 780,678 788,683 805,685 830,687 930,687 950,686 972,687 1240,687 1262,684', '#50a000', 1);
line('189,687 480,686 540,686 580,683 640,683 655,681 668,681 690,683 765,682 820,683 830,687 1262,687', '#1880d8', 1);
line('189,687 560,686 700,685 760,684 810,683 945,684 960,687 1262,687', '#0000c8', 1);
line('189,687 640,686 1262,686', '#781850', 1);

// trend lines
rect(186, 337, RIGHT - 186, 2, '#0000ff');
rect(186, 467, RIGHT - 186, 2, '#0000ff');
line('341,638 1227,76', '#0000ff', 2);
line('736,76 1303,579', '#0000ff', 2);
rect(1302, 277, 3, 190, RED);
rect(1302, 475, 3, 162, BLUE);

label(559, 106, '최고 18,300(2024/05/27, -30.44%)', '#d00000');
line('752,103 771,103', '#d00000', 1);
line('767,100 771,103 767,106', '#d00000', 1);
label(693, 113, '18,300(318 ° )', '#0000c8');
label(348, 587, '9,831( 32 ° )', '#0000c8');
label(1204, 571, '10,063(-45.01 %)', '#0000c8');
label(1028, 623, '최저 9,320(2024/09/09, +36.59%)', '#0000a8');
line('1215,619 1235,619', '#0000a8', 1);
line('1231,616 1235,619 1231,622', '#0000a8', 1);

// price axis
rect(RIGHT, 77, 72, 630, '#f0f0f0');
rect(186, 690, RIGHT - 186, 17, '#f0f0f0');
rect(RIGHT, 77, 1, 630, '#bbb');
label(1309, 98, 'HC -30.44%', '#0000c8');
for (let i = 0; i < 10; i++) {
    const y = 127 + i * 56;
    rect(RIGHT, y, 5, 1, '#bbb');
    for (let k = 1; k < 5 && i < 9; k++) rect(RIGHT, Math.round(y + k * 11.2), 3, 1, '#bbb');
    label(1353, y + 4, (18 - i) + ',000', '#000', 'end');
}
rect(RIGHT, 664, 5, 1, '#bbb');
label(1359, 668, '10,000K', '#000', 'end');
label(1359, 688, '0K', '#000', 'end');
rect(186, 637, 1191, 1, '#888');
rect(186, 690, 1191, 1, '#bbb');
months.forEach((m, i) => {
    rect(m[0], 691, 1, 5, '#bbb');
    add('text', { x: m[0] + 2, y: 703, style: i ? '' : 'font-weight:bold' }, m[1]);
});
label(1315, 704, '09/18');

// price tags
rect(1313, 414, 62, 28, '#ff0000');
add('path', { d: 'M1305 422l6-6v12z', fill: '#e02020', stroke: 'none' });
label(1315, 426, '12,730', '#fff');
label(1315, 439, '(7.97%)', '#fff');
[[330, '14,226'], [460, '11,900']].forEach(t => {
    add('rect', { x: 1305.5, y: t[0] + 0.5, width: 41, height: 15, fill: '#e0ffe0', stroke: '#000' });
    label(1308, t[0] + 12, t[1]);
});
```
